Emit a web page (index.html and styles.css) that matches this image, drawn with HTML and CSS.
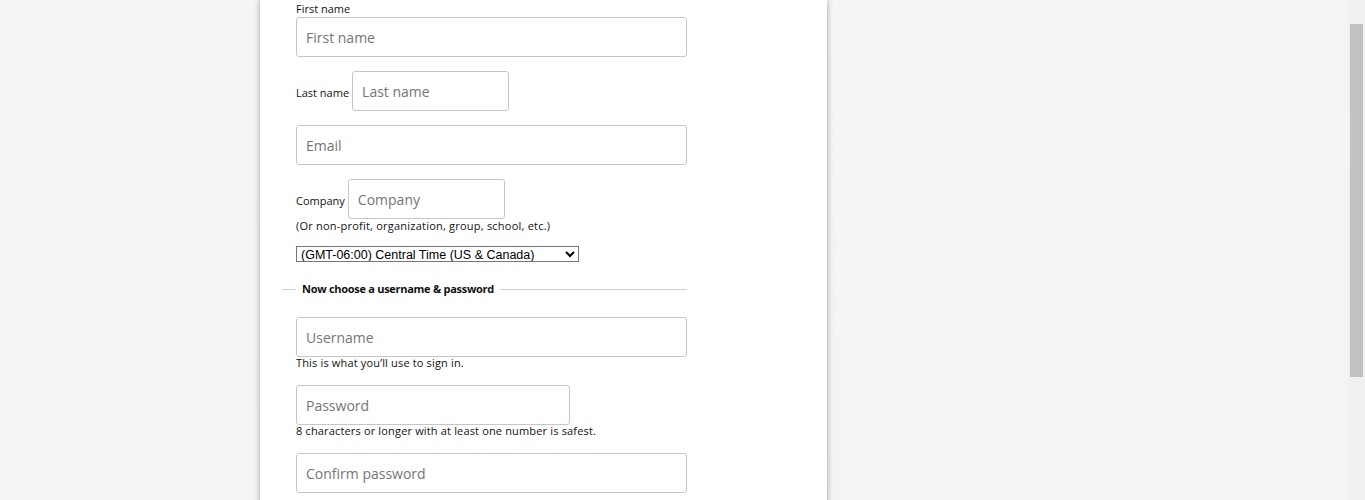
FILE: index.html
```html
<!DOCTYPE html>
<html lang="en">
<head>
<meta charset="utf-8">
<title>Sign up</title>
<link rel="stylesheet" href="styles.css">
</head>
<body>
<div class="page">
  <main class="card">
    <form class="form">
      <div class="field stacked">
        <label class="label" for="fn">First name</label>
        <input class="input wide" id="fn" type="text" placeholder="First name">
      </div>
      <div class="field inline">
        <label class="label" for="ln">Last name</label>
        <input class="input short" id="ln" type="text" placeholder="Last name">
      </div>
      <div class="field">
        <input class="input wide" type="email" placeholder="Email">
      </div>
      <div class="field inline">
        <label class="label" for="co">Company</label>
        <input class="input short" id="co" type="text" placeholder="Company">
      </div>
      <p class="hint">(Or non-profit, organization, group, school, etc.)</p>
      <select class="tz">
        <option>(GMT-06:00) Central Time (US &amp; Canada)</option>
      </select>

      <div class="section">
        <span class="rule lead"></span>
        <span class="legend">Now choose a username &amp; password</span>
        <span class="rule"></span>
      </div>

      <div class="field">
        <input class="input wide" type="text" placeholder="Username">
        <p class="help">This is what you’ll use to sign in.</p>
      </div>
      <div class="field">
        <input class="input medium" type="password" placeholder="Password">
        <p class="help">8 characters or longer with at least one number is safest.</p>
      </div>
      <div class="field">
        <input class="input wide" type="password" placeholder="Confirm password">
      </div>
    </form>
  </main>
</div>
<div class="scrollbar"><div class="thumb"></div></div>
</body>
</html>
```

FILE: styles.css
```css
* { box-sizing: border-box; }
html, body { margin: 0; height: 500px; overflow: hidden; }
body {
  background: linear-gradient(to bottom, #f6f5f3 0px, #f5f5f4 30px, #f4f5f7 48px, #f3f4f6 100%);
  font-family: "Open Sans", "Liberation Sans", sans-serif;
  color: #111;
}
.page {
  padding-left: 260px;
  height: 500px;
}
.card {
  width: 567px;
  height: 520px;
  background: #fff;
  box-shadow: 0 0 6px rgba(0, 0, 0, 0.35);
}
.form {
  padding: 1px 0 0 36px;
  display: flex;
  flex-direction: column;
  align-items: flex-start;
}
.field { margin: 0 0 14px 0; }
.field.stacked { display: flex; flex-direction: column; }
.field.inline { display: flex; align-items: center; gap: 3px; }
.label {
  font-size: 11px;
  line-height: 15px;
  color: #111;
}
.field.stacked .label { line-height: 16px; }
.field.inline .label { padding-top: 3px; }
.input {
  display: block;
  height: 40px;
  border: 1px solid #c6c6c6;
  border-radius: 3px;
  padding: 0 9px;
  font-family: "Open Sans", sans-serif;
  font-size: 14px;
  color: #333;
  background: #fff;
}
.input::placeholder { color: #757575; }
.wide { width: 391px; }
.short { width: 157px; }
.medium { width: 274px; }
.field.inline:has(+ .hint) { margin-bottom: 0; }
.hint {
  margin: 0 0 13px 0;
  font-size: 11px;
  line-height: 14px;
  letter-spacing: 0.22px;
  color: #111;
}
.tz {
  width: 283px;
  height: 16px;
  font-family: "Liberation Sans", Arial, sans-serif;
  font-size: 12.5px;
  color: #000;
  border: 1px solid #767676;
  border-radius: 0;
  background: #fff;
  padding: 0;
  margin: 0;
}
.section {
  display: flex;
  align-items: center;
  width: 405px;
  margin: 19px 0 20px -14px;
}
.rule { flex: 1; height: 1px; background: #d0d0d0; }
.rule.lead { flex: 0 0 14px; }
.legend {
  font-size: 11px;
  font-weight: 700;
  letter-spacing: -0.28px;
  padding: 0 6px 0 6px;
  line-height: 16px;
  color: #111;
}
.help {
  margin: -1px 0 0 0;
  padding-bottom: 1px;
  font-size: 11px;
  line-height: 14px;
  letter-spacing: 0.16px;
  color: #111;
}
.scrollbar {
  position: fixed;
  top: 0;
  right: 0;
  width: 17px;
  height: 500px;
  background: #f1f1f1;
}
.thumb {
  position: absolute;
  top: 24px;
  left: 2px;
  width: 13px;
  height: 353px;
  background: #c1c1c1;
}
```
